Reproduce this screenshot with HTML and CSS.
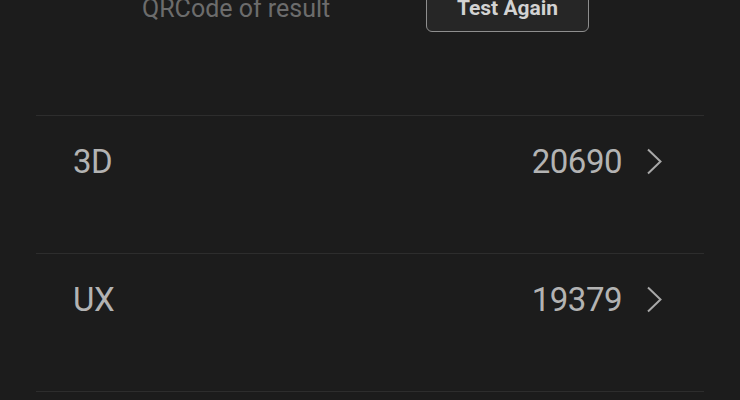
FILE: index.html
```html
<!DOCTYPE html>
<html>
<head>
<meta charset="utf-8">
<link rel="stylesheet" href="styles.css">
</head>
<body>
<div class="header">
  <div class="qr">QRCode of result</div>
  <button class="again">Test Again</button>
</div>
<div class="list">
  <div class="row">
    <span class="label">3D</span>
    <span class="value">20690</span>
    <svg class="chev" width="17" height="27" viewBox="0 0 17 27"><path d="M2 1.5 L14.5 13.5 L2 25.5" fill="none" stroke="#a8a8a8" stroke-width="2"/></svg>
  </div>
  <div class="row">
    <span class="label">UX</span>
    <span class="value">19379</span>
    <svg class="chev" width="17" height="27" viewBox="0 0 17 27"><path d="M2 1.5 L14.5 13.5 L2 25.5" fill="none" stroke="#a8a8a8" stroke-width="2"/></svg>
  </div>
  <div class="row"></div>
</div>
</body>
</html>
```
FILE: styles.css
```css
html, body {
  margin: 0;
  padding: 0;
  background: #1c1c1c;
  font-family: Roboto, "Liberation Sans", sans-serif;
}
.header {
  height: 127px;
  margin-top: -12px;
  display: flex;
  align-items: flex-start;
}
.qr {
  margin-left: 142px;
  width: 284px;
  font-size: 25px;
  line-height: 30px;
  color: #6c6c6c;
  padding-top: 6px;
}
.again {
  width: 163px;
  height: 44px;
  background: #262626;
  border: 1px solid #8e8e8e;
  border-radius: 6px;
  color: #d2d2d2;
  font-family: Roboto, "Liberation Sans", sans-serif;
  font-weight: bold;
  font-size: 21px;
  line-height: 24px;
  padding: 0 0 4px 0;
}
.list {
  margin: 0 36px;
}
.row {
  border-top: 1px solid #2d2d2d;
  height: 138px;
  box-sizing: border-box;
  display: flex;
  align-items: flex-start;
  padding: 27px 41px 0 37px;
}
.label, .value {
  font-size: 33px;
  line-height: 38px;
  color: #b3b3b3;
  letter-spacing: -0.5px;
}
.label {
  flex: 1;
}
.chev {
  margin-left: 24px;
  margin-top: 5px;
}
```
